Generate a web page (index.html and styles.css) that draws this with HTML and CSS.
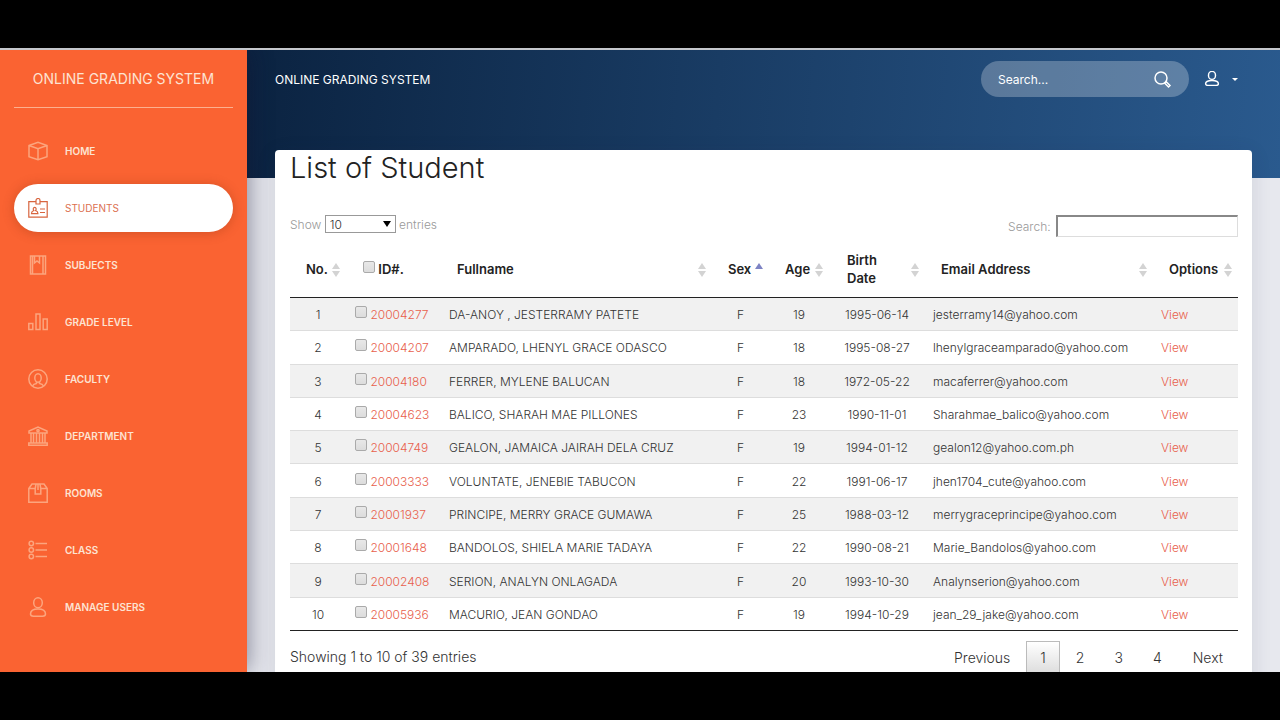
FILE: index.html
```html
<!DOCTYPE html>
<html lang="en">
<head>
<meta charset="utf-8">
<title>Online Grading System</title>
<link rel="stylesheet" href="styles.css">
</head>
<body>
<div class="app">
  <aside class="sidebar">
    <div class="brand">ONLINE GRADING SYSTEM</div>
    <nav class="nav">
      <a class="nav-item" href="#"><svg class="icon" viewBox="0 0 20 20"><path d="M1 4.500 10 1.200l9 3.300v11.200l-9 3.100-9-3.100zM1 4.500l9 3.300 9-3.300M10 7.800v11"/></svg><span>HOME</span></a>
      <a class="nav-item active" href="#"><svg class="icon" viewBox="0 0 20 20"><path d="M8 3.700H.8v15.500h18.400V3.700H12M8 6V2.500a2 2 0 0 1 4 0V6zM3.500 15.600c0-2.500 1.500-2.600 2.300-3-.8-1.200-.8-3.300.9-3.300s1.700 2.100.9 3.300c.8.4 2.300.5 2.300 3zM12 11h5M12 14.500h5"/></svg><span>STUDENTS</span></a>
      <a class="nav-item" href="#"><svg class="icon" viewBox="0 0 20 20"><path d="M2.500 1h15v18h-15zM15 1v18M4.500 1v18M6.500 1v7l2.500-2 2.500 2V1"/></svg><span>SUBJECTS</span></a>
      <a class="nav-item" href="#"><svg class="icon" viewBox="0 0 20 20"><path d="M.8 11.500h4v6h-4zM8 2h4v15.500H8zM15.200 7h4v10.500h-4z"/></svg><span>GRADE LEVEL</span></a>
      <a class="nav-item" href="#"><svg class="icon" viewBox="0 0 20 20"><circle cx="10" cy="10" r="9.200"/><ellipse cx="10" cy="9" rx="3.200" ry="4.200"/><path d="M4.500 17c.8-2 2.300-2.400 4-2.600v-1.600M15.500 17c-.8-2-2.300-2.400-4-2.600v-1.600"/></svg><span>FACULTY</span></a>
      <a class="nav-item" href="#"><svg class="icon" viewBox="0 0 20 20"><path d="M1 7V5l9-4 9 4v2zM.8 17h18.400v2.200H.8zM3 7v10M5.500 7v10M8.500 7v10M11.500 7v10M14.500 7v10M17 7v10"/><circle cx="10" cy="4.500" r="1.100"/></svg><span>DEPARTMENT</span></a>
      <a class="nav-item" href="#"><svg class="icon" viewBox="0 0 20 20"><path d="M.8 5.500 4 1h12l3.200 4.500v13.700H.8zM.8 5.500h6.400M12.800 5.500h6.400M8 1l-.8 4.500V11h5.600V5.500L12 1M10 1v6"/></svg><span>ROOMS</span></a>
      <a class="nav-item" href="#"><svg class="icon" viewBox="0 0 20 20"><circle cx="3.300" cy="3.500" r="2.200"/><circle cx="3.300" cy="10" r="2.200"/><circle cx="3.300" cy="16.500" r="2.200"/><path d="M7.500 3.500H19M7.500 10H19M7.500 16.500H19"/></svg><span>CLASS</span></a>
      <a class="nav-item" href="#"><svg class="icon" viewBox="0 0 20 20"><ellipse cx="10" cy="5.800" rx="4.300" ry="5"/><path d="M2.500 17c0-4 3.500-5 7.500-5s7.500 1 7.500 5c0 1.500-1.500 2.200-3 2.200h-9c-1.500 0-3-.7-3-2.200z"/></svg><span>MANAGE USERS</span></a>
    </nav>
  </aside>
  <div class="main">
    <header class="topbar">
      <a class="title" href="#">ONLINE GRADING SYSTEM</a>
      <form class="search">
        <input type="text" placeholder="Search..." aria-label="Search">
        <button type="button" aria-label="Submit search"><svg class="icon" viewBox="0 0 20 20"><circle cx="9" cy="9" r="6"/><path d="m12.800 14.300 1.500-1.500 3.700 3.700-1.500 1.500z"/></svg></button>
      </form>
      <button class="user" type="button" aria-label="Account"><svg class="icon" viewBox="0 0 20 20"><ellipse cx="10" cy="5.500" rx="4.400" ry="5"/><path d="M2 16c0-3.200 3.500-4.200 8-4.200s8 1 8 4.200c0 1.500-1.500 2-3 2H5c-1.500 0-3-.5-3-2z"/></svg><span class="caret"></span></button>
    </header>
    <main class="card">
      <h1>List of Student</h1>
      <div class="tools">
        <label class="length">Show <span class="select-wrap"><select><option>10</option><option>25</option><option>50</option></select></span> entries</label>
        <label>Search: <input class="filter" type="text"></label>
      </div>
      <table>
        <colgroup><col class="c-no"><col class="c-id"><col class="c-name"><col class="c-sex"><col class="c-age"><col class="c-birth"><col class="c-mail"><col class="c-opt"></colgroup>
        <thead><tr>
          <th class="sort">No.</th>
          <th class="id"><input type="checkbox" id="all"> <label for="all">ID#.</label></th>
          <th class="sort">Fullname</th>
          <th class="sort asc">Sex</th>
          <th class="sort">Age</th>
          <th class="sort wrap">Birth Date</th>
          <th class="sort">Email Address</th>
          <th class="sort">Options</th>
        </tr></thead>
        <tbody>
          <tr><td>1</td><td><input type="checkbox" aria-label="Select 20004277"> <a href="#">20004277</a></td><td>DA-ANOY , JESTERRAMY PATETE</td><td>F</td><td>19</td><td>1995-06-14</td><td>jesterramy14@yahoo.com</td><td><a href="#">View</a></td></tr>
          <tr><td>2</td><td><input type="checkbox" aria-label="Select 20004207"> <a href="#">20004207</a></td><td>AMPARADO, LHENYL GRACE ODASCO</td><td>F</td><td>18</td><td>1995-08-27</td><td>lhenylgraceamparado@yahoo.com</td><td><a href="#">View</a></td></tr>
          <tr><td>3</td><td><input type="checkbox" aria-label="Select 20004180"> <a href="#">20004180</a></td><td>FERRER, MYLENE BALUCAN</td><td>F</td><td>18</td><td>1972-05-22</td><td>macaferrer@yahoo.com</td><td><a href="#">View</a></td></tr>
          <tr><td>4</td><td><input type="checkbox" aria-label="Select 20004623"> <a href="#">20004623</a></td><td>BALICO, SHARAH MAE PILLONES</td><td>F</td><td>23</td><td>1990-11-01</td><td>Sharahmae_balico@yahoo.com</td><td><a href="#">View</a></td></tr>
          <tr><td>5</td><td><input type="checkbox" aria-label="Select 20004749"> <a href="#">20004749</a></td><td>GEALON, JAMAICA JAIRAH DELA CRUZ</td><td>F</td><td>19</td><td>1994-01-12</td><td>gealon12@yahoo.com.ph</td><td><a href="#">View</a></td></tr>
          <tr><td>6</td><td><input type="checkbox" aria-label="Select 20003333"> <a href="#">20003333</a></td><td>VOLUNTATE, JENEBIE TABUCON</td><td>F</td><td>22</td><td>1991-06-17</td><td>jhen1704_cute@yahoo.com</td><td><a href="#">View</a></td></tr>
          <tr><td>7</td><td><input type="checkbox" aria-label="Select 20001937"> <a href="#">20001937</a></td><td>PRINCIPE, MERRY GRACE GUMAWA</td><td>F</td><td>25</td><td>1988-03-12</td><td>merrygraceprincipe@yahoo.com</td><td><a href="#">View</a></td></tr>
          <tr><td>8</td><td><input type="checkbox" aria-label="Select 20001648"> <a href="#">20001648</a></td><td>BANDOLOS, SHIELA MARIE TADAYA</td><td>F</td><td>22</td><td>1990-08-21</td><td>Marie_Bandolos@yahoo.com</td><td><a href="#">View</a></td></tr>
          <tr><td>9</td><td><input type="checkbox" aria-label="Select 20002408"> <a href="#">20002408</a></td><td>SERION, ANALYN ONLAGADA</td><td>F</td><td>20</td><td>1993-10-30</td><td>Analynserion@yahoo.com</td><td><a href="#">View</a></td></tr>
          <tr><td>10</td><td><input type="checkbox" aria-label="Select 20005936"> <a href="#">20005936</a></td><td>MACURIO, JEAN GONDAO</td><td>F</td><td>19</td><td>1994-10-29</td><td>jean_29_jake@yahoo.com</td><td><a href="#">View</a></td></tr>
        </tbody>
      </table>
      <div class="foot">
        <span>Showing 1 to 10 of 39 entries</span>
        <nav class="pages" aria-label="Pages"><a href="#">Previous</a><a class="current" href="#">1</a><a href="#">2</a><a href="#">3</a><a href="#">4</a><a href="#">Next</a></nav>
      </div>
    </main>
  </div>
</div>
</body>
</html>
```
FILE: styles.css
```css
* { box-sizing: border-box; }
body {
  margin: 0;
  height: 100vh;
  padding: 48px 0;
  background: #000;
  font-family: Inter, "Open Sans", sans-serif;
  font-size: 12px;
  font-weight: 300;
  color: #333;
}
a { color: inherit; text-decoration: none; }
button { padding: 0; border: 0; background: none; color: inherit; }
input, select { font: inherit; }
.icon {
  width: 20px;
  height: 20px;
  flex: none;
  fill: none;
  stroke: currentColor;
  stroke-width: 1.5;
}
.app {
  display: flex;
  height: 100%;
  overflow: hidden;
  border-top: 2px solid #c5c7cc;
}
.sidebar {
  position: relative;
  flex: none;
  width: 247px;
  padding: 0 14px;
  background: #fa6332;
  color: #fde3d2;
  box-shadow: 2px 0 22px rgba(20, 20, 50, .45);
}
.brand {
  height: 58px;
  line-height: 58px;
  border-bottom: 1px solid #fcb08f;
  text-align: center;
  font-size: 14px;
  font-weight: 400;
  white-space: nowrap;
}
.nav { display: grid; gap: 9px; margin-top: 19px; }
.nav-item {
  display: flex;
  align-items: center;
  gap: 17px;
  height: 48px;
  padding: 0 14px;
  border-radius: 24px;
  font-size: 10px;
  font-weight: 600;
}
.nav-item .icon { color: #fca57e; }
.active {
  background: #fff;
  color: #dc7050;
  font-weight: 400;
  box-shadow: 0 1px 12px rgba(120, 40, 10, .3);
}
.active .icon { color: #d8653f; stroke-width: 1.2; }
.main {
  flex: 1;
  min-width: 0;
  padding: 0 28px;
  background: linear-gradient(95deg, #0b2341, #2a5a8e) top / 100% 128px no-repeat, #e7e8ee;
}
.topbar { display: flex; align-items: center; height: 58px; color: #fff; }
.title { margin-right: auto; font-size: 12px; font-weight: 400; }
.search {
  display: flex;
  align-items: center;
  width: 208px;
  height: 36px;
  padding: 0 17px;
  border-radius: 18px;
  background: rgba(255, 255, 255, .26);
}
.search input {
  flex: 1;
  min-width: 0;
  padding: 0;
  border: 0;
  outline: 0;
  background: none;
  color: #fff;
  font-weight: 400;
}
.search input::placeholder { color: #fff; opacity: 1; }
.search button { display: flex; }
.user { display: flex; align-items: center; gap: 12px; margin: 0 14px 0 15px; }
.user .icon { width: 16px; height: 16px; stroke-width: 1.8; }
.caret { border: 3px solid transparent; border-top-color: #fff; border-bottom: 0; }
.card {
  min-height: 600px;
  margin-top: 42px;
  padding: 0 14px 0 15px;
  border-radius: 4px 4px 0 0;
  background: #fff;
  box-shadow: 0 4px 20px rgba(30, 40, 80, .12);
}
h1 { margin: 0; font-size: 29px; line-height: 36px; font-weight: 300; color: #222; }
.tools {
  display: flex;
  justify-content: space-between;
  align-items: flex-end;
  margin-top: 29px;
  height: 22px;
  color: #999;
}
.length { align-self: flex-start; }
.select-wrap { position: relative; display: inline-block; }
.select-wrap::after {
  content: "";
  position: absolute;
  right: 5px;
  top: 6px;
  border: 4px solid transparent;
  border-top: 6px solid #000;
  border-bottom: 0;
  pointer-events: none;
}
select {
  appearance: none;
  width: 71px;
  height: 18px;
  padding: 0 4px;
  border: 1px solid #999;
  border-radius: 0;
  background: #fff;
  color: #333;
}
.filter {
  width: 182px;
  height: 22px;
  margin-left: 2px;
  border: 1px solid #ddd;
  border-top: 2px solid #888;
  border-left: 2px solid #888;
}
table {
  width: 100%;
  table-layout: fixed;
  border-collapse: separate;
  border-spacing: 0;
}
.c-no { width: 56px; }
.c-id { width: 95px; }
.c-name { width: 271px; }
.c-sex { width: 57px; }
.c-age { width: 60px; }
.c-birth { width: 96px; }
.c-mail { width: 228px; }
.c-opt { width: 85px; }
th {
  height: 61px;
  padding: 6px 0 2px 16px;
  border-bottom: 1px solid #222;
  text-align: left;
  font-size: 13px;
  font-weight: 600;
  line-height: 18px;
  color: #222;
}
.wrap { padding-left: 18px; padding-right: 36px; }
.sort {
  background: url("data:image/svg+xml,%3Csvg xmlns='http://www.w3.org/2000/svg' width='8' height='14'%3E%3Cpath d='M0 6 4 0l4 6zM0 8h8l-4 6z' fill='%23d3d3d3'/%3E%3C/svg%3E") right 6px top 26px no-repeat;
}
.asc {
  background-image: url("data:image/svg+xml,%3Csvg xmlns='http://www.w3.org/2000/svg' width='8' height='14'%3E%3Cpath d='M0 6 4 0l4 6z' fill='%237d83c4'/%3E%3C/svg%3E");
}
tbody { height: 333px; }
td {
  padding: 7px 8px 5px;
  border-bottom: 1px solid #ddd;
  line-height: 20px;
  white-space: nowrap;
}
tbody tr:nth-child(odd) { background: #f1f1f1; }
tbody tr:last-child td { border-bottom-color: #222; }
td:nth-child(1), td:nth-child(4), td:nth-child(5), td:nth-child(6) { text-align: center; }
td a { color: #e8604c; }
input[type="checkbox"] {
  appearance: none;
  width: 12px;
  height: 12px;
  margin: 0 0 1px 1px;
  border: 1px solid #aaa;
  border-radius: 2px;
  background: linear-gradient(#e8e8e8, #dcdcdc);
}
.foot {
  display: flex;
  justify-content: space-between;
  align-items: flex-start;
  padding-top: 10px;
  font-size: 14px;
  line-height: 32px;
}
.pages { display: flex; gap: 2px; }
.pages a { padding: 0 13px; border: 1px solid transparent; }
.pages a:last-child { padding: 0 14px; }
.pages .current { border-color: #bbb; background: linear-gradient(#fff, #dcdcdc); }
```
